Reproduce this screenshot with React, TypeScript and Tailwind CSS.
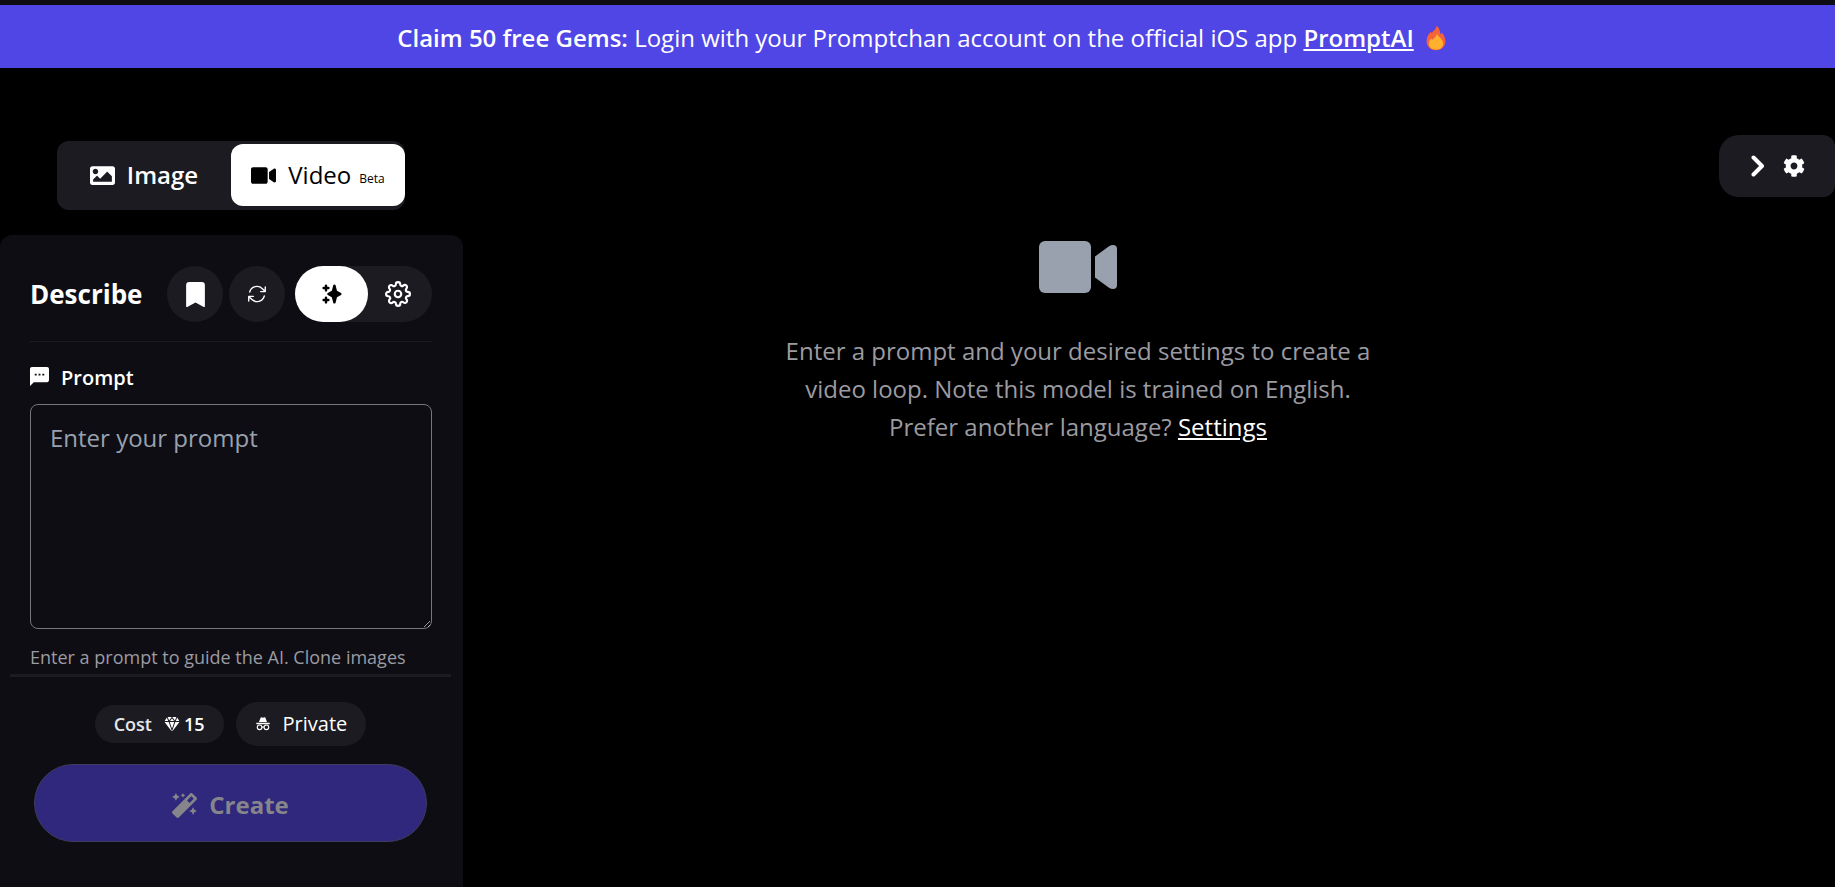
import type { ReactNode } from "react";
import { BsBookmarkFill } from "react-icons/bs";
import { FaCog, FaImage, FaMagic, FaVideo } from "react-icons/fa";
import { FiSettings } from "react-icons/fi";
import { HiSparkles } from "react-icons/hi";
import { HiOutlineArrowPath } from "react-icons/hi2";
import { IoDiamond } from "react-icons/io5";

function FlameIcon() {
  return (
    <svg viewBox="0 0 20 26" className="h-[26px] w-5" aria-hidden="true">
      <path
        fill="#f4633a"
        d="M10.500.800C10.500 3.500 8.600 4.800 6.900 6.600 6.500 7.100 6.100 7.700 5.800 8.300 5.400 7.900 5.200 7.300 5 6.600 2.400 9.300.600 12.600.600 16.200.600 21.800 4.600 25.200 10 25.200s9.400-3.400 9.400-9c0-4.200-2.100-6.600-3.800-9-.3 1-.8 1.700-1.400 2.100C14.200 6 13.400 2.800 10.500.800Z"
      />
      <path
        fill="#ffb02e"
        d="M10.600 8.800c0 2.400-1.400 3.300-2.600 4.500-.6.600-1 1.100-1.300 1.700-.5-.4-.9-.9-1.100-1.500C3.900 14.800 2.900 16.600 2.900 18.600c0 3.800 3.100 6.200 7.100 6.200s7.100-2.400 7.100-6.200c0-4.400-4.300-6.400-6.500-9.800Z"
      />
    </svg>
  );
}

function CameraIcon() {
  return (
    <svg
      viewBox="0 0 80 52"
      className="h-[52px] w-20"
      fill="currentColor"
      aria-hidden="true"
    >
      <rect x="1" width="52" height="52" rx="6" />
      <path d="M57 15.500 71 5.200Q73 4 75 4q4 0 4 4v36q0 4-4 4-2 0-4-1.200L57 36.500Z" />
    </svg>
  );
}

function MessageIcon() {
  return (
    <svg
      viewBox="2 2 20 20"
      className="mb-1 size-[19px]"
      fill="currentColor"
      aria-hidden="true"
    >
      <path d="M20 2H4c-1.100 0-2 .9-2 2v18l4-4h14c1.100 0 2-.9 2-2V4c0-1.100-.9-2-2-2ZM9 11H7V9h2v2Zm4 0h-2V9h2v2Zm4 0h-2V9h2v2Z" />
    </svg>
  );
}

function IncognitoIcon() {
  return (
    <svg
      viewBox="0 0 24 24"
      className="size-4"
      fill="none"
      stroke="currentColor"
      strokeWidth="1.700"
      aria-hidden="true"
    >
      <path
        fill="currentColor"
        stroke="none"
        d="M2 10.200h20v2H2ZM8.400 2.700C8.600 2.200 9.200 1.900 9.800 2l2.200.8 2.200-.8c.6-.1 1.100.1 1.400.7L18 9H6Z"
      />
      <circle cx="6.900" cy="17" r="3.500" />
      <circle cx="17.100" cy="17" r="3.500" />
      <path d="M10.400 16.900q1.600-1 3.200 0" />
    </svg>
  );
}

function ChevronIcon() {
  return (
    <svg
      viewBox="0 0 14 22"
      className="h-[22px] w-[14px]"
      fill="none"
      stroke="currentColor"
      strokeWidth="4"
      strokeLinecap="round"
      strokeLinejoin="round"
      aria-hidden="true"
    >
      <path d="m2.500 2.500 8.500 8.500-8.500 8.500" />
    </svg>
  );
}

function RoundButton({ label, children }: { label: string; children: ReactNode }) {
  return (
    <button
      type="button"
      aria-label={label}
      className="flex size-14 items-center justify-center rounded-full bg-[#1c1b22]"
    >
      {children}
    </button>
  );
}

function Banner() {
  return (
    <div className="flex min-h-[63px] items-center justify-center gap-3 bg-[#4f46e5] pt-[2px] pr-4 pl-6 text-2xl">
      <p>
        <strong className="font-semibold">Claim 50 free Gems:</strong> Login with
        your Promptchan account on the official iOS app{" "}
        <a href="#promptai" className="font-semibold underline underline-offset-2">
          PromptAI
        </a>
      </p>
      <FlameIcon />
    </div>
  );
}

function ModeSwitch() {
  return (
    <div className="ml-[57px] flex w-[348px] rounded-xl bg-[#1c1b22] pt-[3px] pb-1">
      <button
        type="button"
        className="flex flex-1 items-center justify-center gap-3 text-2xl font-semibold"
      >
        <FaImage className="size-[25px]" />
        Image
      </button>
      <button
        type="button"
        className="flex h-[62px] w-[174px] items-center justify-center rounded-xl bg-white text-2xl text-black"
      >
        <FaVideo className="mr-3 size-[25px]" />
        Video
        <span className="ml-2 pt-2 text-xs">Beta</span>
      </button>
    </div>
  );
}

function PromptPanel() {
  return (
    <section className="flex w-[463px] flex-1 flex-col rounded-t-xl bg-[#0e0d13] pt-[31px]">
      <div className="mr-[31px] ml-[30px] flex items-center border-b border-[#1c1b22] pb-[19px]">
        <h1 className="flex-1 text-[26px] font-bold">Describe</h1>
        <div className="flex gap-[6px]">
          <RoundButton label="Saved prompts">
            <BsBookmarkFill className="size-[25px]" />
          </RoundButton>
          <RoundButton label="Reset">
            <HiOutlineArrowPath className="size-[22px]" />
          </RoundButton>
        </div>
        <div className="ml-[10px] flex w-[137px] rounded-full bg-[#1c1b22]">
          <button
            type="button"
            aria-label="Describe"
            className="flex h-14 w-[73px] items-center justify-center rounded-full bg-white text-black"
          >
            <HiSparkles className="size-6" />
          </button>
          <button
            type="button"
            aria-label="Advanced settings"
            className="flex flex-1 items-center justify-center pr-1"
          >
            <FiSettings className="size-[26px]" />
          </button>
        </div>
      </div>

      <div className="mr-[31px] ml-[30px] mt-5">
        <label
          htmlFor="prompt"
          className="flex items-center gap-3 text-xl leading-8 font-semibold"
        >
          <MessageIcon />
          Prompt
        </label>
        <textarea
          id="prompt"
          placeholder="Enter your prompt"
          className="mt-[10px] block h-[225px] w-full resize-y rounded-lg border border-[#77767c] bg-transparent px-[19px] py-[17px] text-2xl scheme-dark placeholder:text-gray-400"
        />
        <p className="mt-[14px] pb-[3px] text-lg text-[#9c9ba1]">
          Enter a prompt to guide the AI. Clone images
        </p>
      </div>

      <div className="mr-3 ml-[10px] flex flex-col items-center border-t-[3px] border-[#1c1b22] px-6 pt-[25px]">
        <div className="flex items-center gap-3">
          <div className="flex h-[38px] items-center rounded-full bg-[#1c1b22] px-[19px] text-lg font-semibold">
            <span className="text-gray-200">Cost</span>
            <IoDiamond className="mr-1 ml-3 size-4" />
            15
          </div>
          <button
            type="button"
            className="flex h-11 items-center gap-3 rounded-full bg-[#1c1b22] px-[19px] text-xl"
          >
            <IncognitoIcon />
            Private
          </button>
        </div>
        <button
          type="button"
          className="mt-[18px] flex h-[78px] w-full items-center justify-center gap-3 rounded-full border border-[#3f3b5c] bg-[#2f287c] pt-1 text-2xl font-bold text-[#86858c]"
        >
          <FaMagic className="size-[25px]" />
          Create
        </button>
      </div>
    </section>
  );
}

export default function App() {
  return (
    <div className="flex min-h-screen flex-col border-t-[5px] border-[#0e0d13] bg-black font-['Open_Sans','Noto_Sans',sans-serif] text-white">
      <Banner />
      <div className="flex flex-1">
        <div className="flex flex-col gap-[25px] pt-[73px]">
          <ModeSwitch />
          <PromptPanel />
        </div>
        <main className="flex flex-1 flex-col items-center pt-[173px] pr-[26px] text-center text-2xl">
          <div className="text-gray-400">
            <CameraIcon />
          </div>
          <p className="mt-[39px] max-w-[600px] leading-[38px] text-[#9c9ba1]">
            Enter a prompt and your desired settings to create a video loop. Note
            this model is trained on English. Prefer another language?{" "}
            <a href="#settings" className="text-white underline underline-offset-2">
              Settings
            </a>
          </p>
        </main>
        <button
          type="button"
          aria-label="Toggle settings"
          className="mt-[67px] flex h-[62px] w-[116px] items-center gap-[18px] rounded-l-[20px] rounded-r-xl bg-[#1c1b22] pl-8"
        >
          <ChevronIcon />
          <FaCog className="size-[22px]" />
        </button>
      </div>
    </div>
  );
}
